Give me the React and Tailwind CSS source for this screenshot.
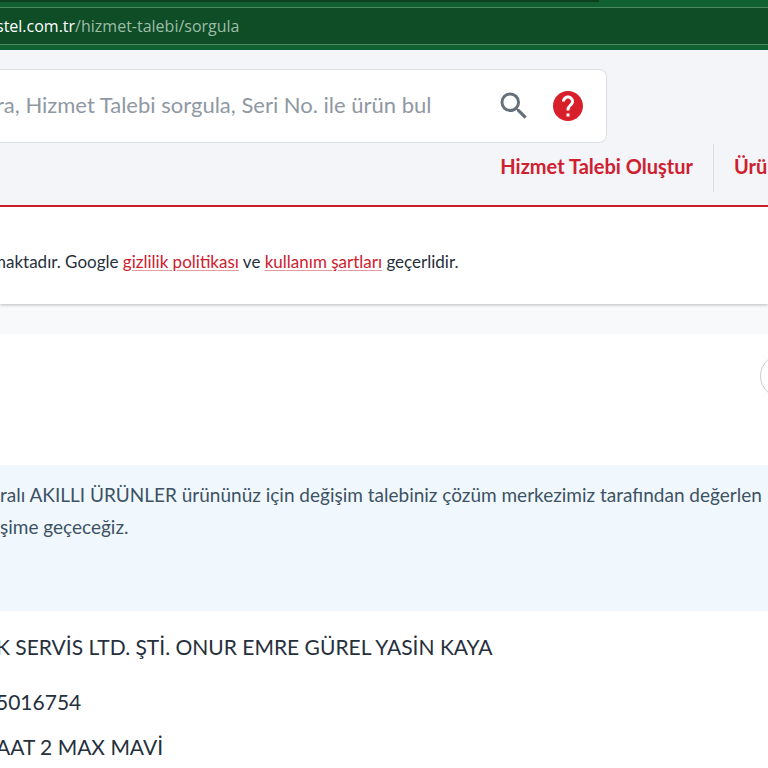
import React from 'react';
import { MdSearch, MdHelp } from 'react-icons/md';

const DETAILS = [
  { id: 'customer', text: 'K SERVİS LTD. ŞTİ. ONUR EMRE GÜREL YASİN KAYA', row: 'h-[72px]' },
  { id: 'serial', text: '5016754', row: 'h-[38px]' },
  { id: 'product', text: 'AAT 2 MAX MAVİ', row: 'h-[52px]' },
];

const AddressBar = () => (
  <div className="bg-[#106032] pb-[5px]">
    <div className="h-[2px] w-[78%] bg-[#0e4020]" />
    <div className="mt-[5px] flex h-[38px] items-center border-y border-[#4b8a60] bg-[#0e4d25] font-['Open_Sans',sans-serif] text-base whitespace-nowrap text-[#9dbda8]">
      <span className="-ml-1 text-white">stel.com.tr</span>/hizmet-talebi/sorgula
    </div>
  </div>
);

const Header = () => (
  <header className="border-b-2 border-[#cf2027] bg-[#f3f5f8] pt-[19px]">
    <form className="flex h-[74px] w-[79%] items-center rounded-r-lg border border-l-0 border-[#dcdfe3] bg-white pr-5">
      <input
        type="text"
        aria-label="Ara"
        placeholder="ra, Hizmet Talebi sorgula, Seri No. ile ürün bul"
        className="-ml-1 min-w-0 flex-1 pb-1 text-[22px] outline-none placeholder:text-[#8f98a3]"
      />
      <button type="button" aria-label="Sorgula" className="mr-[18px] text-[#66707a]">
        <MdSearch className="size-9" />
      </button>
      <button type="button" aria-label="Yardım" className="text-[#d8202a]">
        <MdHelp className="size-9" />
      </button>
    </form>
    <nav className="flex h-[62px] items-start justify-end pt-px text-xl font-bold whitespace-nowrap text-[#cf2030]">
      <a href="#olustur" className="pt-2 pr-5">Hizmet Talebi Oluştur</a>
      <a href="#urun" className="h-12 w-[55px] overflow-hidden border-l border-[#d9dce1] pt-2 pl-5">
        Ürün
      </a>
    </nav>
  </header>
);

export default function App() {
  return (
    <div className="min-h-screen overflow-hidden bg-white font-[Lato,sans-serif] text-[#26303c]">
      <AddressBar />
      <Header />
      <main>
        <section className="relative flex h-[97px] items-center bg-white pt-3 text-[17px] whitespace-nowrap shadow-[0_1px_3px_rgba(0,0,0,0.25)]">
          <p className="-ml-2">
            maktadır. Google{' '}
            <a href="#gizlilik" className="text-[#cf2030] underline decoration-[#e59a9f] underline-offset-2">gizlilik politikası</a>
            {' '}ve{' '}
            <a href="#kullanim" className="text-[#cf2030] underline decoration-[#e59a9f] underline-offset-2">kullanım şartları</a>
            {' '}geçerlidir.
          </p>
        </section>
        <div className="h-[30px] bg-[#f8f9fb]" />
        <section>
          <div className="flex h-[131px] justify-end pt-5">
            <button
              type="button"
              aria-label="Kapat"
              className="-mr-9 size-11 rounded-full border border-[#c9ccd0]"
            />
          </div>
          <div className="h-[146px] bg-[#f0f8fe] pt-[14px] text-[19px] leading-8 whitespace-nowrap text-[#3d5263]">
            <p>ralı AKILLI ÜRÜNLER ürününüz için değişim talebiniz çözüm merkezimiz tarafından değerlen</p>
            <p>şime geçeceğiz.</p>
          </div>
          {DETAILS.map((item) => (
            <div key={item.id} className={`-ml-1 flex items-center text-[21px] whitespace-nowrap ${item.row}`}>
              {item.text}
            </div>
          ))}
        </section>
      </main>
    </div>
  );
}
